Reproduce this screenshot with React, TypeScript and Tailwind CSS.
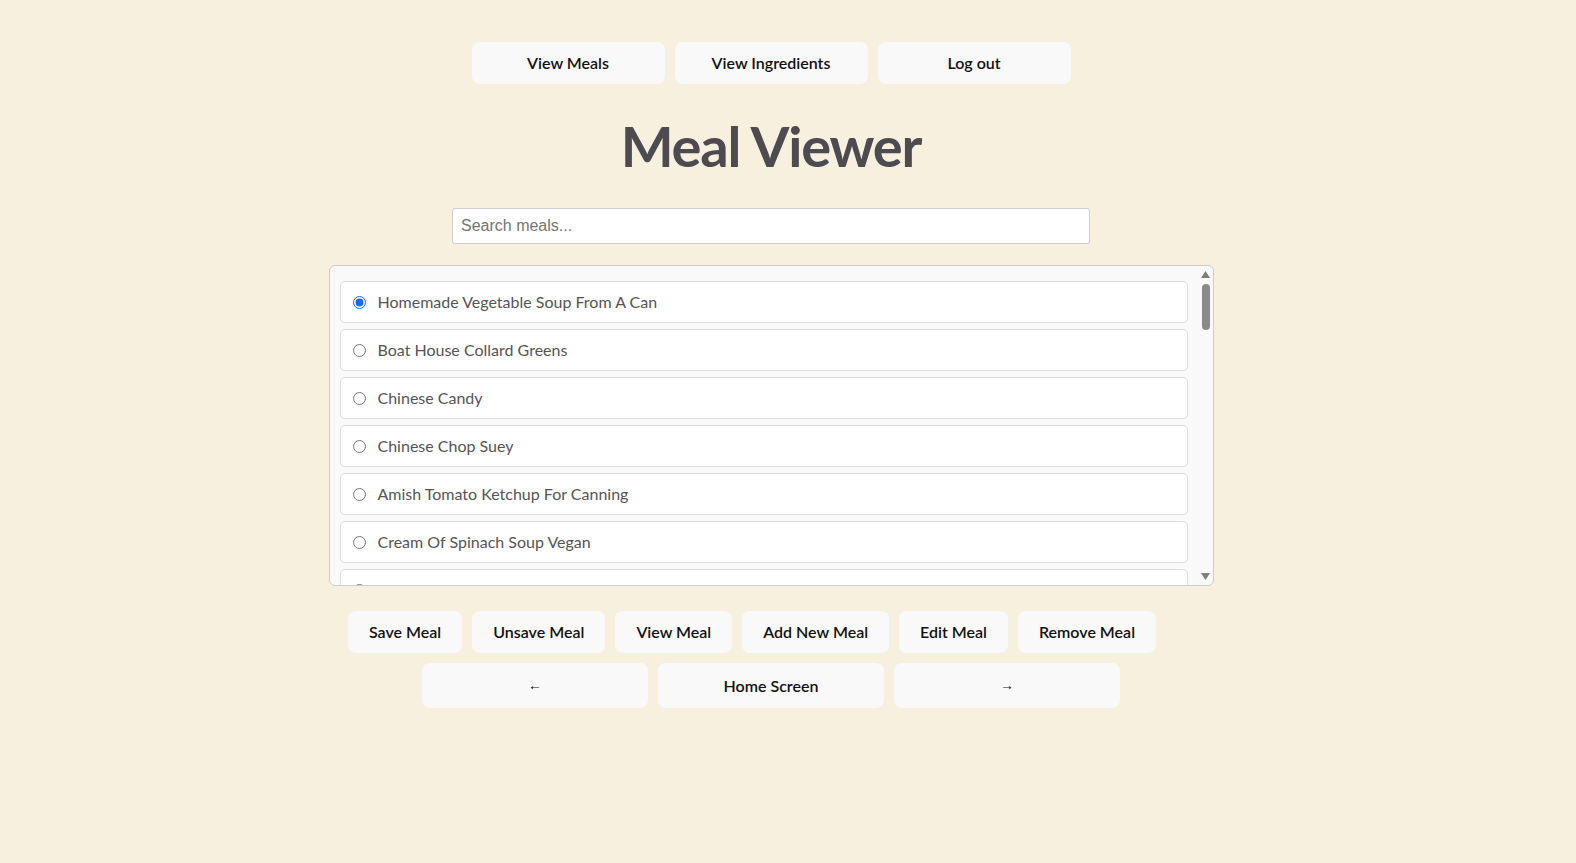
import { useRef, useState } from "react"

const meals = [
  "Homemade Vegetable Soup From A Can",
  "Boat House Collard Greens",
  "Chinese Candy",
  "Chinese Chop Suey",
  "Amish Tomato Ketchup For Canning",
  "Cream Of Spinach Soup Vegan",
  "Hillbilly Chicken Casserole",
  "Easy Baked Macaroni",
  "Grandma's Pot Roast",
  "Lemon Garlic Chicken",
  "Beef Stroganoff",
  "Southern Cornbread",
  "Shrimp And Grits",
  "Classic Meatloaf",
  "Chicken Pot Pie",
  "Black Bean Burgers",
  "Tuna Noodle Casserole",
  "Stuffed Bell Peppers",
  "Baked Ziti",
  "Potato Leek Soup",
  "Sweet Potato Casserole",
  "Pulled Pork Sandwiches",
  "Chicken Fried Steak",
  "Green Bean Casserole",
  "Fish Tacos",
  "Split Pea Soup",
  "Banana Bread",
  "Vegetable Lasagna",
  "Chili Con Carne",
  "Egg Fried Rice",
  "Broccoli Cheddar Soup",
  "Apple Crisp",
  "Beef Stew",
  "Deviled Eggs",
  "Pasta Primavera",
  "Clam Chowder",
  "Honey Glazed Ham",
  "Peach Cobbler",
  "Salisbury Steak",
  "Minestrone",
]

const actions = ["Save Meal", "Unsave Meal", "View Meal", "Add New Meal", "Edit Meal", "Remove Meal"]

// base button look, font set per use
const base = "rounded-lg bg-[#f9f9f9] px-[21px] text-[#111]"
const btn = base + " h-[42px] text-[16px] font-semibold [font-family:Lato,sans-serif]"
const arrowBtn = base + " h-[45px] w-[226px] text-[14px] font-normal [font-family:'Liberation_Sans',sans-serif]"

const THUMB = 46
const TRACK = 319 - 34

export default function App() {
  const [selected, setSelected] = useState(0)
  const [query, setQuery] = useState("")
  const [thumbTop, setThumbTop] = useState(1)
  const listRef = useRef<HTMLDivElement>(null)

  const handleScroll = () => {
    const el = listRef.current
    if (!el) return
    const max = el.scrollHeight - el.clientHeight
    const ratio = max > 0 ? el.scrollTop / max : 0
    setThumbTop(1 + ratio * (TRACK - THUMB - 2))
  }

  const scrollBy = (dy: number) => listRef.current?.scrollBy({ top: dy })

  return (
    <div className="min-h-[863px] w-full bg-[#f8f0df] pr-[34px] [font-family:Lato,sans-serif]">
      <div className="flex flex-col items-center pt-[42px]">
        {/* Top nav */}
        <div className="flex gap-[10px]">
          <button className={btn + " w-[193px]"}>View Meals</button>
          <button className={btn + " w-[193px]"}>View Ingredients</button>
          <button className={btn + " w-[193px]"}>Log out</button>
        </div>

        <h1 className="mt-[28px] text-[56px] font-bold leading-[68px] tracking-[-1.2px] text-[#4d4b50]">Meal Viewer</h1>

        <input
          value={query}
          onChange={e => setQuery(e.target.value)}
          placeholder="Search meals..."
          className="mt-[28px] h-[36px] w-[638px] rounded-[3px] border border-[#ccc] bg-white px-2 text-[16px] text-[#333] outline-none placeholder:text-[#757575] [font-family:'Liberation_Sans',Arial,sans-serif]"
        />

        {/* Meal list */}
        <div className="mt-[21px] flex h-[321px] w-[885px] overflow-hidden rounded-md border border-[#ccc] bg-[#f9f9f9]">
          <div
            ref={listRef}
            onScroll={handleScroll}
            className="flex-1 overflow-y-scroll py-[10px] pl-[10px] pr-[10px] [scrollbar-width:none] [&::-webkit-scrollbar]:hidden"
          >
            <div className="flex flex-col gap-[6px] pt-[5px]">
              {meals.map((meal, i) => (
                <label
                  key={meal}
                  className="flex h-[42px] shrink-0 cursor-pointer items-center gap-[12px] rounded-[5px] border border-[#ddd] bg-white pl-[12px] text-[16px] leading-[20px] text-[#555]"
                >
                  <input
                    type="radio"
                    name="meal"
                    checked={selected === i}
                    onChange={() => setSelected(i)}
                    className="m-0 h-[13px] w-[13px] accent-[#0b6cff]"
                  />
                  {meal}
                </label>
              ))}
            </div>
          </div>

          {/* scrollbar */}
          <div className="flex w-[15px] flex-col">
            <button onClick={() => scrollBy(-40)} className="flex h-[17px] items-center justify-center">
              <svg width="9" height="7" viewBox="0 0 9 7">
                <path d="M4.5 0 L9 7 L0 7 Z" fill="#7d7d7d" />
              </svg>
            </button>
            <div className="relative flex-1">
              <div
                className="absolute left-[4px] w-[8px] rounded-full bg-[#8a8a8a]"
                style={{ top: thumbTop, height: THUMB }}
              />
            </div>
            <button onClick={() => scrollBy(40)} className="flex h-[17px] items-center justify-center">
              <svg width="9" height="7" viewBox="0 0 9 7">
                <path d="M0 0 L9 0 L4.5 7 Z" fill="#7d7d7d" />
              </svg>
            </button>
          </div>
        </div>

        {/* Actions */}
        <div className="mr-[38px] mt-[25px] flex gap-[10px]">
          {actions.map(a => (
            <button key={a} className={btn}>
              {a}
            </button>
          ))}
        </div>

        <div className="mt-[10px] flex gap-[10px]">
          <button className={arrowBtn}>←</button>
          <button className={base + " h-[45px] w-[226px] text-[16px] font-semibold [font-family:Lato,sans-serif]"}>Home Screen</button>
          <button className={arrowBtn}>→</button>
        </div>
      </div>
    </div>
  )
}
